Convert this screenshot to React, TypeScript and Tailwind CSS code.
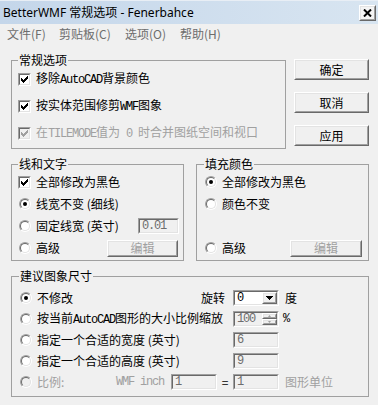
import React from "react";

const mono = "font-['Liberation_Mono',monospace] text-[12px] tracking-[-1.2px]";

function Mono({ children, className = "" }: { children: React.ReactNode; className?: string }) {
  return <span className={`${mono} ${className}`}>{children}</span>;
}

const CHECK_PX: [number, number][] = [
  [6, 0], [5, 1], [6, 1], [0, 2], [4, 2], [5, 2], [6, 2], [0, 3], [1, 3], [3, 3], [4, 3], [5, 3],
  [0, 4], [1, 4], [2, 4], [3, 4], [4, 4], [1, 5], [2, 5], [3, 5], [2, 6],
];

function CheckMark({ color }: { color: string }) {
  return (
    <svg width="7" height="7" viewBox="0 0 7 7" shapeRendering="crispEdges">
      {CHECK_PX.map(([x, y], i) => (
        <rect key={i} x={x} y={y} width="1" height="1" fill={color} />
      ))}
    </svg>
  );
}

function Checkbox({ checked, disabled }: { checked?: boolean; disabled?: boolean }) {
  return (
    <span className="flex w-[13px] h-[13px] shrink-0 border border-t-[#a0a0a0] border-l-[#a0a0a0] border-r-white border-b-white">
      <span
        className={`flex flex-1 items-center justify-center border border-t-[#696969] border-l-[#696969] border-r-[#e3e3e3] border-b-[#e3e3e3] ${
          disabled ? "bg-[#f0f0f0]" : "bg-white"
        }`}
      >
        {checked && <CheckMark color={disabled ? "#a0a0a0" : "#000000"} />}
      </span>
    </span>
  );
}

function Radio({ checked, disabled }: { checked?: boolean; disabled?: boolean }) {
  return (
    <span className="flex w-[12px] h-[12px] shrink-0 rounded-full border border-t-[#a0a0a0] border-l-[#a0a0a0] border-r-white border-b-white">
      <span
        className={`flex flex-1 items-center justify-center rounded-full border border-t-[#696969] border-l-[#696969] border-r-[#e3e3e3] border-b-[#e3e3e3] ${
          disabled ? "bg-[#f0f0f0]" : "bg-white"
        }`}
      >
        {checked && <span className="w-[4px] h-[4px] rounded-full bg-black" />}
      </span>
    </span>
  );
}

function Option({
  indicator,
  children,
  disabled,
}: {
  indicator: React.ReactNode;
  children: React.ReactNode;
  disabled?: boolean;
}) {
  return (
    <span className={`flex items-center gap-[5px] ${disabled ? "text-[#a0a0a0]" : "text-black"}`}>
      <span className="flex w-[13px] justify-end">{indicator}</span>
      <span className="whitespace-nowrap leading-[16px]">{children}</span>
    </span>
  );
}

function Btn({
  children,
  className = "",
  disabled,
}: {
  children: React.ReactNode;
  className?: string;
  disabled?: boolean;
}) {
  return (
    <div
      className={`flex shrink-0 border border-t-white border-l-white border-r-[#696969] border-b-[#696969] ${className}`}
    >
      <div
        className={`flex flex-1 items-center justify-center border border-t-[#e3e3e3] border-l-[#e3e3e3] border-r-[#a0a0a0] border-b-[#a0a0a0] bg-[#f0f0f0] leading-[14px] ${
          disabled ? "text-[#a0a0a0]" : "text-black"
        }`}
      >
        {children}
      </div>
    </div>
  );
}

function Sunken({
  children,
  className = "",
  white,
}: {
  children?: React.ReactNode;
  className?: string;
  white?: boolean;
}) {
  return (
    <div
      className={`flex shrink-0 border border-t-[#a0a0a0] border-l-[#a0a0a0] border-r-white border-b-white ${className}`}
    >
      <div
        className={`flex flex-1 items-center border border-t-[#696969] border-l-[#696969] border-r-[#e3e3e3] border-b-[#e3e3e3] ${
          white ? "bg-white" : "bg-[#f0f0f0]"
        }`}
      >
        {children}
      </div>
    </div>
  );
}

function Field({ value, className = "" }: { value: string; className?: string }) {
  return (
    <Sunken className={`h-[16px] ${className}`}>
      <Mono className="pl-[2px] leading-[12px] text-[#6d6d6d]">{value}</Mono>
    </Sunken>
  );
}

function SmallRaised({ children, className = "" }: { children?: React.ReactNode; className?: string }) {
  return (
    <div className={`flex border border-t-white border-l-white border-r-[#696969] border-b-[#696969] ${className}`}>
      <div className="flex flex-1 items-center justify-center border border-t-[#e3e3e3] border-l-[#e3e3e3] border-r-[#a0a0a0] border-b-[#a0a0a0] bg-[#f0f0f0]">
        {children}
      </div>
    </div>
  );
}

function Select() {
  return (
    <Sunken className="w-[46px] h-[16px]" white>
      <Mono className="flex-1 pl-[2px] leading-[12px] text-black">0</Mono>
      <SmallRaised className="w-[15px] h-full">
        <svg width="7" height="4" viewBox="0 0 7 4" shapeRendering="crispEdges">
          <path d="M0 0H7L3.5 4Z" fill="#000" />
        </svg>
      </SmallRaised>
    </Sunken>
  );
}

function Spin() {
  return (
    <Sunken className="w-[46px] h-[16px]">
      <Mono className="flex-1 pl-[2px] leading-[12px] text-[#6d6d6d]">100</Mono>
      <div className="flex flex-col w-[15px] h-full">
        <SmallRaised className="flex-1">
          <svg width="3" height="2" viewBox="0 0 3 2">
            <path d="M0 2H3L1.5 0Z" fill="#a0a0a0" />
          </svg>
        </SmallRaised>
        <SmallRaised className="flex-1">
          <svg width="3" height="2" viewBox="0 0 3 2">
            <path d="M0 0H3L1.5 2Z" fill="#a0a0a0" />
          </svg>
        </SmallRaised>
      </div>
    </Sunken>
  );
}

export default function App() {
  return (
    <div className="w-[378px] h-[405px] bg-[#f0f0f0] overflow-hidden flex flex-col font-['Noto_Sans_CJK_SC',sans-serif] text-[12px] text-black">
      {/* Title bar */}
      <div className="h-[24px] shrink-0 flex items-start border-t border-[#e8eef5] bg-gradient-to-r from-[#c4d6ea] to-[#d8e5f1]">
        <span className="ml-[3px] mt-[4px] leading-[16px] whitespace-nowrap font-['Noto_Sans','Noto_Sans_CJK_SC',sans-serif] text-[12px] text-black">
          BetterWMF 常规选项 - Fenerbahce
        </span>
        <div className="ml-auto mr-[2px] mt-[4px] flex w-[17px] h-[16px] border border-t-white border-l-white border-r-[#696969] border-b-[#696969]">
          <div className="flex flex-1 items-center justify-center border border-t-[#e3e3e3] border-l-[#e3e3e3] border-r-[#a0a0a0] border-b-[#a0a0a0] bg-[#f4f4f4]">
            <svg width="9" height="8" viewBox="0 0 9 8">
              <path d="M1 0.5L8 7.5M8 0.5L1 7.5" stroke="#000" strokeWidth="2" />
            </svg>
          </div>
        </div>
      </div>

      {/* Menu bar */}
      <div className="h-[20px] shrink-0 flex items-center pl-[7px] text-[#6d6d6d] leading-[16px] whitespace-nowrap">
        <span className="w-[52px]">文件(F)</span>
        <span className="w-[66px]">剪贴板(C)</span>
        <span className="w-[55px]">选项(O)</span>
        <span>帮助(H)</span>
      </div>

      {/* Body */}
      <div className="flex flex-col pl-[11px]">
        {/* Row 1 */}
        <div className="h-[112px] flex items-start">
          <fieldset className="mt-[8px] w-[275px] border border-[#a0a0a0] pl-[6px] pb-[6px]">
            <legend className="px-[1px] leading-[16px]">常规选项</legend>
            <div className="flex flex-col gap-[9px] pt-[2px]">
              <Option indicator={<Checkbox checked />}>
                移除<Mono>AutoCAD</Mono>背景颜色
              </Option>
              <Option indicator={<Checkbox checked />}>
                按实体范围修剪<Mono>WMF</Mono>图象
              </Option>
              <Option indicator={<Checkbox checked disabled />} disabled>
                在<Mono>TILEMODE</Mono>值为<Mono> 0 </Mono>时合并图纸空间和视口
              </Option>
            </div>
          </fieldset>
          <div className="ml-[8px] mt-[15px] flex flex-col gap-[12px]">
            <Btn className="w-[75px] h-[21px]">确定</Btn>
            <Btn className="w-[75px] h-[21px]">取消</Btn>
            <Btn className="w-[75px] h-[21px]">应用</Btn>
          </div>
        </div>

        {/* Row 2 */}
        <div className="flex items-start">
          <fieldset className="w-[173px] border border-[#a0a0a0] pl-[6px] pr-[4px] pb-[4px]">
            <legend className="px-[1px] leading-[16px]">线和文字</legend>
            <div className="flex flex-col gap-[6px] pt-[2px]">
              <div className="h-[16px] flex items-center">
                <Option indicator={<Checkbox checked />}>全部修改为黑色</Option>
              </div>
              <div className="h-[16px] flex items-center">
                <Option indicator={<Radio checked />}>线宽不变 (细线)</Option>
              </div>
              <div className="h-[16px] flex items-center">
                <Option indicator={<Radio />}>固定线宽 (英寸)</Option>
                <Field value="0.01" className="ml-auto w-[41px]" />
              </div>
              <div className="h-[16px] flex items-center">
                <Option indicator={<Radio />}>高级</Option>
                <Btn className="ml-auto mr-[1px] w-[71px] h-[17px]" disabled>
                  编辑
                </Btn>
              </div>
            </div>
          </fieldset>
          <fieldset className="ml-[12px] w-[173px] border border-[#a0a0a0] pl-[7px] pr-[6px] pb-[4px]">
            <legend className="px-[1px] leading-[16px]">填充颜色</legend>
            <div className="flex flex-col gap-[6px] pt-[2px]">
              <div className="h-[16px] flex items-center">
                <Option indicator={<Radio checked />}>全部修改为黑色</Option>
              </div>
              <div className="h-[16px] flex items-center">
                <Option indicator={<Radio />}>颜色不变</Option>
              </div>
              <div className="h-[16px]" />
              <div className="h-[16px] flex items-center">
                <Option indicator={<Radio />}>高级</Option>
                <Btn className="ml-auto w-[72px] h-[17px]" disabled>
                  编辑
                </Btn>
              </div>
            </div>
          </fieldset>
        </div>

        {/* Row 3 */}
        <fieldset className="mt-[7px] w-[358px] border border-[#a0a0a0] pl-[7px] pb-[6px]">
          <legend className="px-[1px] leading-[16px]">建议图象尺寸</legend>
          <div className="flex flex-col gap-[5px] pt-[6px]">
            <div className="h-[16px] flex items-center">
              <div className="w-[214px] flex items-center">
                <Option indicator={<Radio checked />}>不修改</Option>
                <span className="ml-auto mr-[8px] leading-[16px]">旋转</span>
              </div>
              <Select />
              <span className="ml-[6px] leading-[16px]">度</span>
            </div>
            <div className="h-[16px] flex items-center">
              <div className="w-[214px] flex items-center">
                <Option indicator={<Radio />}>
                  按当前<Mono>AutoCAD</Mono>图形的大小比例缩放
                </Option>
              </div>
              <Spin />
              <Mono className="ml-[4px]">%</Mono>
            </div>
            <div className="h-[16px] flex items-center">
              <div className="w-[214px] flex items-center">
                <Option indicator={<Radio />}>指定一个合适的宽度 (英寸)</Option>
              </div>
              <Field value="6" className="w-[46px]" />
            </div>
            <div className="h-[16px] flex items-center">
              <div className="w-[214px] flex items-center">
                <Option indicator={<Radio />}>指定一个合适的高度 (英寸)</Option>
              </div>
              <Field value="9" className="w-[46px]" />
            </div>
            <div className="h-[16px] flex items-center">
              <div className="w-[214px] flex items-center">
                <div className="w-[97px] flex items-center">
                  <Option indicator={<Radio disabled />} disabled>
                    比例:
                  </Option>
                </div>
                <Mono className="w-[55px] text-[#a0a0a0] whitespace-nowrap">WMF inch</Mono>
                <Field value="1" className="w-[46px]" />
                <span className="w-[16px] text-center leading-[16px]">=</span>
              </div>
              <Field value="1" className="w-[46px]" />
              <span className="ml-[6px] leading-[16px] text-[#a0a0a0]">图形单位</span>
            </div>
          </div>
        </fieldset>
      </div>
    </div>
  );
}
